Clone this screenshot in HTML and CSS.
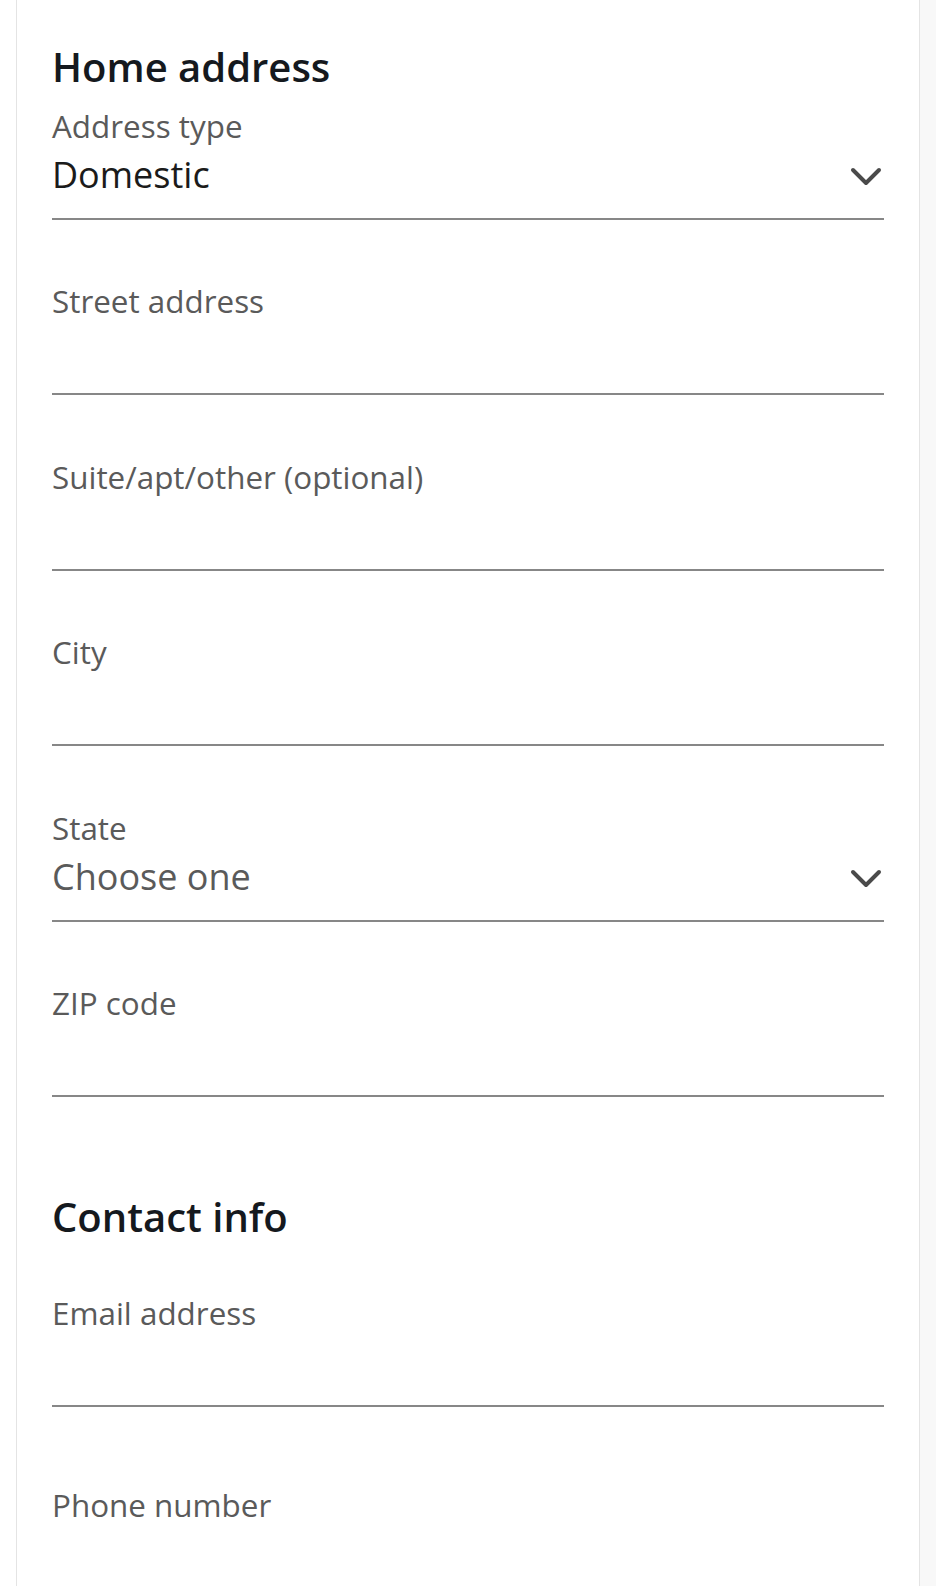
FILE: index.html
```html
<!DOCTYPE html>
<html lang="en">
<head>
  <meta charset="UTF-8" />
  <title>Home address</title>
  <link rel="stylesheet" href="styles.css">
</head>
<body>

  <div class="page">
    <main class="card">

      <!-- Home address -->
      <section class="form-section">
        <h2 class="section-title">Home address</h2>

        <div class="field">
          <label class="field-label" for="addressType">Address type</label>
          <div class="select-box" id="addressType">
            <span class="select-value">Domestic</span>
            <svg class="chevron" width="32" height="20" viewBox="0 0 32 20" aria-hidden="true">
              <path d="M3 3 L16 16 L29 3" />
            </svg>
          </div>
        </div>

        <div class="field">
          <label class="field-label" for="street">Street address</label>
          <input class="field-input" type="text" id="street" name="street" />
        </div>

        <div class="field">
          <label class="field-label" for="suite">Suite/apt/other (optional)</label>
          <input class="field-input" type="text" id="suite" name="suite" />
        </div>

        <div class="field">
          <label class="field-label" for="city">City</label>
          <input class="field-input" type="text" id="city" name="city" />
        </div>

        <div class="field">
          <label class="field-label" for="state">State</label>
          <div class="select-box" id="state">
            <span class="select-value placeholder">Choose one</span>
            <svg class="chevron" width="32" height="20" viewBox="0 0 32 20" aria-hidden="true">
              <path d="M3 3 L16 16 L29 3" />
            </svg>
          </div>
        </div>

        <div class="field">
          <label class="field-label" for="zip">ZIP code</label>
          <input class="field-input" type="text" id="zip" name="zip" />
        </div>
      </section>

      <!-- Contact info -->
      <section class="form-section">
        <h2 class="section-title section-title-spaced">Contact info</h2>

        <div class="field field-hint">
          <label class="field-label" for="email">Email address</label>
          <input class="field-input" type="email" id="email" name="email" />
        </div>

        <div class="field">
          <label class="field-label" for="phone">Phone number</label>
          <input class="field-input" type="tel" id="phone" name="phone" />
        </div>
      </section>

    </main>
    <div class="gutter"></div>
  </div>

</body>
</html>
```

FILE: styles.css
```css
/* === Page === */
body {
  margin: 0;
  background: #ffffff;
  font-family: 'Open Sans', 'Noto Sans', Arial, sans-serif;
}

.page {
  display: flex;
  min-height: 100vh;
  overflow: hidden;
}

/* === Card === */
.card {
  width: 832px;
  margin-left: 16px;
  padding: 43px 35px 0;
  background: #ffffff;
  border-left: 1px solid #e4e4e4;
  border-right: 1px solid #e4e4e4;
}

.gutter {
  flex: 1;
  background: #f8f8f8;
}

/* === Sections === */
.form-section {
  margin-bottom: 96px;
}

.section-title {
  margin: 0 0 14.5px;
  font-size: 40px;
  line-height: 48px;
  font-weight: 600;
  color: #15191e;
}

.section-title-spaced {
  margin-bottom: 51.5px;
}

/* === Fields === */
.field {
  margin-bottom: 61.5px;
}

.field:last-child {
  margin-bottom: 0;
}

.field-hint {
  margin-bottom: 78.5px;
}

.field-label {
  display: block;
  margin-bottom: 8px;
  font-size: 31.4px;
  line-height: 40px;
  color: #5a5a5a;
}

.field-input,
.select-box {
  display: flex;
  align-items: center;
  width: 100%;
  height: 66px;
  box-sizing: border-box;
  margin: 0;
  padding: 0 0 22px;
  border: none;
  border-bottom: 2px solid #878787;
  background: transparent;
  font-family: inherit;
  font-size: 36px;
  color: #1b1b1b;
  outline: none;
}

.select-value {
  flex: 1;
  line-height: 44px;
}

.select-value.placeholder {
  color: #5a5a5a;
}

.chevron {
  flex-shrink: 0;
  margin: 4px 2px 0 0;
}

.chevron path {
  fill: none;
  stroke: #4a4a4a;
  stroke-width: 4;
  stroke-linecap: round;
  stroke-linejoin: round;
}
```
